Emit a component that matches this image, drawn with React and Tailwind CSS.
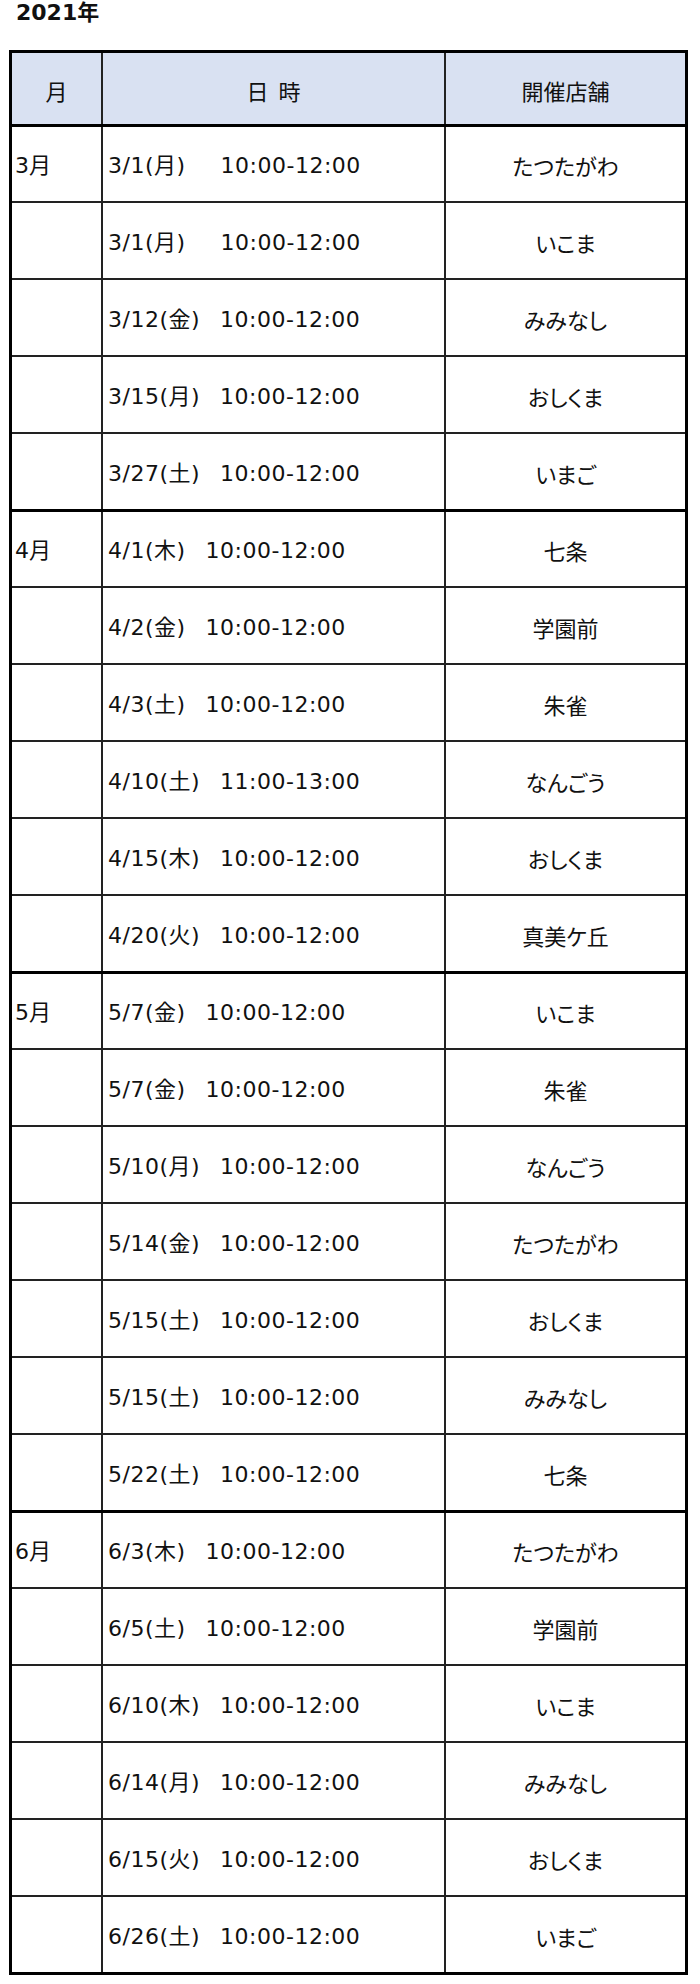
import React from "react";

const rows = [
  { m: "3月", d: "3/1(月)", t: "10:00-12:00", s: "たつたがわ", wide: true },
  { d: "3/1(月)", t: "10:00-12:00", s: "いこま", wide: true },
  { d: "3/12(金)", t: "10:00-12:00", s: "みみなし" },
  { d: "3/15(月)", t: "10:00-12:00", s: "おしくま" },
  { d: "3/27(土)", t: "10:00-12:00", s: "いまご" },
  { m: "4月", d: "4/1(木)", t: "10:00-12:00", s: "七条" },
  { d: "4/2(金)", t: "10:00-12:00", s: "学園前" },
  { d: "4/3(土)", t: "10:00-12:00", s: "朱雀" },
  { d: "4/10(土)", t: "11:00-13:00", s: "なんごう" },
  { d: "4/15(木)", t: "10:00-12:00", s: "おしくま" },
  { d: "4/20(火)", t: "10:00-12:00", s: "真美ケ丘" },
  { m: "5月", d: "5/7(金)", t: "10:00-12:00", s: "いこま" },
  { d: "5/7(金)", t: "10:00-12:00", s: "朱雀" },
  { d: "5/10(月)", t: "10:00-12:00", s: "なんごう" },
  { d: "5/14(金)", t: "10:00-12:00", s: "たつたがわ" },
  { d: "5/15(土)", t: "10:00-12:00", s: "おしくま" },
  { d: "5/15(土)", t: "10:00-12:00", s: "みみなし" },
  { d: "5/22(土)", t: "10:00-12:00", s: "七条" },
  { m: "6月", d: "6/3(木)", t: "10:00-12:00", s: "たつたがわ" },
  { d: "6/5(土)", t: "10:00-12:00", s: "学園前" },
  { d: "6/10(木)", t: "10:00-12:00", s: "いこま" },
  { d: "6/14(月)", t: "10:00-12:00", s: "みみなし" },
  { d: "6/15(火)", t: "10:00-12:00", s: "おしくま" },
  { d: "6/26(土)", t: "10:00-12:00", s: "いまご" },
];

function Row({ row }) {
  const edge = row.m
    ? "border-t-[3px] border-black"
    : "border-t-2 border-[#222]";
  return (
    <div className={`flex h-[77px] ${edge}`}>
      <div className="w-[91px] shrink-0 border-r-2 border-[#222] flex items-center pl-[3px] pt-[3px]">
        {row.m}
      </div>
      <div className="w-[343px] shrink-0 border-r-2 border-[#222] flex items-center pl-[5px] pt-[3px] tracking-[0.5px] whitespace-nowrap">
        <span>{row.d}</span>
        <span className={row.wide ? "ml-[35px]" : "ml-[20px]"}>{row.t}</span>
      </div>
      <div className="flex-1 flex items-center justify-center pt-[3px] font-['Noto_Sans_CJK_JP',sans-serif] [font-feature-settings:'palt']">
        {row.s}
      </div>
    </div>
  );
}

export default function App() {
  return (
    <div className="w-[700px] min-h-[1984px] bg-white text-[#111] text-[22px] font-['DejaVu_Sans','Noto_Sans_CJK_JP',sans-serif]">
      {/* title */}
      <div className="pl-[16px] pt-[2px] leading-[22px] font-bold">2021年</div>

      <div className="ml-[9px] mt-[26px] w-[679px] border-[3px] border-black">
        {/* header */}
        <div className="flex h-[71px] bg-[#d9e1f2] font-['Noto_Sans_CJK_JP',sans-serif]">
          <div className="w-[91px] shrink-0 border-r-2 border-[#222] flex items-center justify-center pt-[3px]">
            月
          </div>
          <div className="w-[343px] shrink-0 border-r-2 border-[#222] flex items-center justify-center pt-[3px]">
            日&nbsp;&nbsp;時
          </div>
          <div className="flex-1 flex items-center justify-center pt-[3px]">
            開催店舗
          </div>
        </div>

        {rows.map((row, i) => (
          <Row key={i} row={row} />
        ))}
      </div>
    </div>
  );
}
